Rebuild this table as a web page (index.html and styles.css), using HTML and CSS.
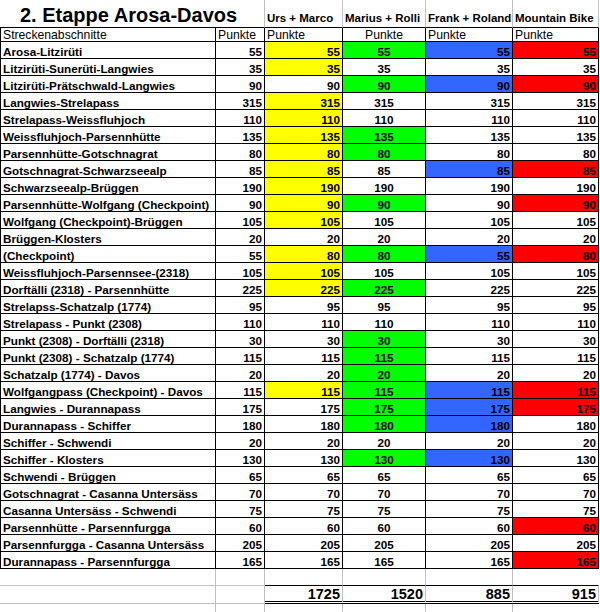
FILE: index.html
```html
<!DOCTYPE html>
<html lang="de">
<head>
<meta charset="utf-8">
<title>2. Etappe Arosa-Davos</title>
<link rel="stylesheet" href="styles.css">
</head>
<body>
<div class="sheet">
  <div class="row title-row">
    <div class="cell title">2. Etappe Arosa-Davos</div>
    <div class="cell team">Urs + Marco</div>
    <div class="cell team">Marius + Rolli</div>
    <div class="cell team">Frank + Roland</div>
    <div class="cell team">Mountain Bike</div>
  </div>
  <div class="row head-row">
    <div class="cell first">Streckenabschnitte</div>
    <div class="cell">Punkte</div>
    <div class="cell">Punkte</div>
    <div class="cell center">Punkte</div>
    <div class="cell">Punkte</div>
    <div class="cell">Punkte</div>
  </div>

  <div class="row data"><div class="cell first">Arosa-Litzirüti</div><div class="cell num">55</div><div class="cell num yellow">55</div><div class="cell center green">55</div><div class="cell num blue">55</div><div class="cell num red">55</div></div>
  <div class="row data"><div class="cell first">Litzirüti-Sunerüti-Langwies</div><div class="cell num">35</div><div class="cell num yellow">35</div><div class="cell center">35</div><div class="cell num">35</div><div class="cell num">35</div></div>
  <div class="row data"><div class="cell first">Litzirüti-Prätschwald-Langwies</div><div class="cell num">90</div><div class="cell num">90</div><div class="cell center green">90</div><div class="cell num blue">90</div><div class="cell num red">90</div></div>
  <div class="row data"><div class="cell first">Langwies-Strelapass</div><div class="cell num">315</div><div class="cell num yellow">315</div><div class="cell center">315</div><div class="cell num">315</div><div class="cell num">315</div></div>
  <div class="row data"><div class="cell first">Strelapass-Weissfluhjoch</div><div class="cell num">110</div><div class="cell num yellow">110</div><div class="cell center">110</div><div class="cell num">110</div><div class="cell num">110</div></div>
  <div class="row data"><div class="cell first">Weissfluhjoch-Parsennhütte</div><div class="cell num">135</div><div class="cell num yellow">135</div><div class="cell center green">135</div><div class="cell num">135</div><div class="cell num">135</div></div>
  <div class="row data"><div class="cell first">Parsennhütte-Gotschnagrat</div><div class="cell num">80</div><div class="cell num yellow">80</div><div class="cell center green">80</div><div class="cell num">80</div><div class="cell num">80</div></div>
  <div class="row data"><div class="cell first">Gotschnagrat-Schwarzseealp</div><div class="cell num">85</div><div class="cell num yellow">85</div><div class="cell center">85</div><div class="cell num blue">85</div><div class="cell num red">85</div></div>
  <div class="row data"><div class="cell first">Schwarzseealp-Brüggen</div><div class="cell num">190</div><div class="cell num yellow">190</div><div class="cell center">190</div><div class="cell num">190</div><div class="cell num">190</div></div>
  <div class="row data"><div class="cell first">Parsennhütte-Wolfgang (Checkpoint)</div><div class="cell num">90</div><div class="cell num yellow">90</div><div class="cell center green">90</div><div class="cell num">90</div><div class="cell num red">90</div></div>
  <div class="row data"><div class="cell first">Wolfgang (Checkpoint)-Brüggen</div><div class="cell num">105</div><div class="cell num yellow">105</div><div class="cell center">105</div><div class="cell num">105</div><div class="cell num">105</div></div>
  <div class="row data"><div class="cell first">Brüggen-Klosters</div><div class="cell num">20</div><div class="cell num">20</div><div class="cell center">20</div><div class="cell num">20</div><div class="cell num">20</div></div>
  <div class="row data"><div class="cell first">(Checkpoint)</div><div class="cell num">55</div><div class="cell num yellow">80</div><div class="cell center green">80</div><div class="cell num blue">55</div><div class="cell num red">80</div></div>
  <div class="row data"><div class="cell first">Weissfluhjoch-Parsennsee-(2318)</div><div class="cell num">105</div><div class="cell num yellow">105</div><div class="cell center">105</div><div class="cell num">105</div><div class="cell num">105</div></div>
  <div class="row data"><div class="cell first">Dorftälli (2318) - Parsennhütte</div><div class="cell num">225</div><div class="cell num yellow">225</div><div class="cell center green">225</div><div class="cell num">225</div><div class="cell num">225</div></div>
  <div class="row data"><div class="cell first">Strelapss-Schatzalp (1774)</div><div class="cell num">95</div><div class="cell num">95</div><div class="cell center">95</div><div class="cell num">95</div><div class="cell num">95</div></div>
  <div class="row data"><div class="cell first">Strelapass - Punkt (2308)</div><div class="cell num">110</div><div class="cell num">110</div><div class="cell center">110</div><div class="cell num">110</div><div class="cell num">110</div></div>
  <div class="row data"><div class="cell first">Punkt (2308) - Dorftälli (2318)</div><div class="cell num">30</div><div class="cell num">30</div><div class="cell center green">30</div><div class="cell num">30</div><div class="cell num">30</div></div>
  <div class="row data"><div class="cell first">Punkt (2308) - Schatzalp (1774)</div><div class="cell num">115</div><div class="cell num">115</div><div class="cell center green">115</div><div class="cell num">115</div><div class="cell num">115</div></div>
  <div class="row data"><div class="cell first">Schatzalp (1774) - Davos</div><div class="cell num">20</div><div class="cell num">20</div><div class="cell center green">20</div><div class="cell num">20</div><div class="cell num">20</div></div>
  <div class="row data"><div class="cell first">Wolfgangpass (Checkpoint) - Davos</div><div class="cell num">115</div><div class="cell num yellow">115</div><div class="cell center green">115</div><div class="cell num blue">115</div><div class="cell num red">115</div></div>
  <div class="row data"><div class="cell first">Langwies - Durannapass</div><div class="cell num">175</div><div class="cell num">175</div><div class="cell center green">175</div><div class="cell num blue">175</div><div class="cell num red">175</div></div>
  <div class="row data"><div class="cell first">Durannapass - Schiffer</div><div class="cell num">180</div><div class="cell num">180</div><div class="cell center green">180</div><div class="cell num blue">180</div><div class="cell num">180</div></div>
  <div class="row data"><div class="cell first">Schiffer - Schwendi</div><div class="cell num">20</div><div class="cell num">20</div><div class="cell center">20</div><div class="cell num">20</div><div class="cell num">20</div></div>
  <div class="row data"><div class="cell first">Schiffer - Klosters</div><div class="cell num">130</div><div class="cell num">130</div><div class="cell center green">130</div><div class="cell num blue">130</div><div class="cell num">130</div></div>
  <div class="row data"><div class="cell first">Schwendi - Brüggen</div><div class="cell num">65</div><div class="cell num">65</div><div class="cell center">65</div><div class="cell num">65</div><div class="cell num">65</div></div>
  <div class="row data"><div class="cell first">Gotschnagrat - Casanna Untersäss</div><div class="cell num">70</div><div class="cell num">70</div><div class="cell center">70</div><div class="cell num">70</div><div class="cell num">70</div></div>
  <div class="row data"><div class="cell first">Casanna Untersäss - Schwendi</div><div class="cell num">75</div><div class="cell num">75</div><div class="cell center">75</div><div class="cell num">75</div><div class="cell num">75</div></div>
  <div class="row data"><div class="cell first">Parsennhütte - Parsennfurgga</div><div class="cell num">60</div><div class="cell num">60</div><div class="cell center">60</div><div class="cell num">60</div><div class="cell num red">60</div></div>
  <div class="row data"><div class="cell first">Parsennfurgga - Casanna Untersäss</div><div class="cell num">205</div><div class="cell num">205</div><div class="cell center">205</div><div class="cell num">205</div><div class="cell num">205</div></div>
  <div class="row data"><div class="cell first">Durannapass - Parsennfurgga</div><div class="cell num">165</div><div class="cell num">165</div><div class="cell center">165</div><div class="cell num">165</div><div class="cell num red">165</div></div>

  <div class="row empty"><div class="cell grid"></div><div class="cell grid"></div><div class="cell grid-v"></div><div class="cell grid-v"></div><div class="cell grid-v"></div><div class="cell grid-v end"></div></div>
  <div class="row total-row"><div class="cell grid"></div><div class="cell grid"></div><div class="cell total num">1725</div><div class="cell total num">1520</div><div class="cell total num">885</div><div class="cell total num end">915</div></div>
  <div class="row tail"><div class="cell grid"></div><div class="cell grid"></div><div class="cell grid"></div><div class="cell grid"></div><div class="cell grid"></div><div class="cell grid end"></div></div>
</div>
</body>
</html>
```

FILE: styles.css
```css
html, body {
  margin: 0;
  padding: 0;
  background: #ffffff;
}

.sheet {
  width: 600px;
  height: 612px;
  overflow: hidden;
  font-family: "Liberation Sans", Arial, sans-serif;
  color: #000000;
}

.row {
  display: grid;
  grid-template-columns: 216px 49px 78px 83px 87px 86px;
}

.cell {
  box-sizing: border-box;
  border-right: 1px solid #000000;
  border-bottom: 1px solid #000000;
  padding: 0 2px;
  display: flex;
  align-items: flex-end;
  white-space: nowrap;
  overflow: hidden;
}

.first {
  border-left: 1px solid #000000;
}

.num {
  justify-content: flex-end;
}

.center {
  justify-content: center;
}

/* title row */
.title-row {
  height: 28px;
  grid-template-columns: 265px 78px 83px 87px 86px;
}

.title-row .cell {
  border-right-color: #c0c0c0;
}

.title {
  padding-left: 20px;
  font-size: 20px;
  font-weight: bold;
  line-height: 24px;
  overflow: visible;
}

.team {
  font-size: 11.5px;
  font-weight: bold;
  line-height: 13px;
  padding-bottom: 2px;
}

/* header row */
.head-row {
  height: 14px;
  font-size: 12.2px;
  line-height: 11px;
}

/* data rows */
.data {
  height: 17px;
  font-size: 11.7px;
  font-weight: bold;
  line-height: 13px;
}

.yellow { background: #ffff00; }
.green  { background: #00ff00; }
.blue   { background: #3366ff; }
.red    { background: #ff0000; }

/* empty / grid cells */
.empty {
  height: 17px;
}

.grid {
  border-right-color: #c0c0c0;
  border-bottom-color: #c0c0c0;
}

.grid-v {
  border-right-color: #c0c0c0;
}

.end {
  border-right-color: transparent;
}

.total-row {
  height: 18px;
}

.total {
  border-right-color: #c0c0c0;
  border-bottom: 3px double #000000;
  font-size: 14.5px;
  font-weight: bold;
  line-height: 14px;
}

.tail {
  height: 20px;
}

.tail .cell {
  border-bottom-color: transparent;
}
```
